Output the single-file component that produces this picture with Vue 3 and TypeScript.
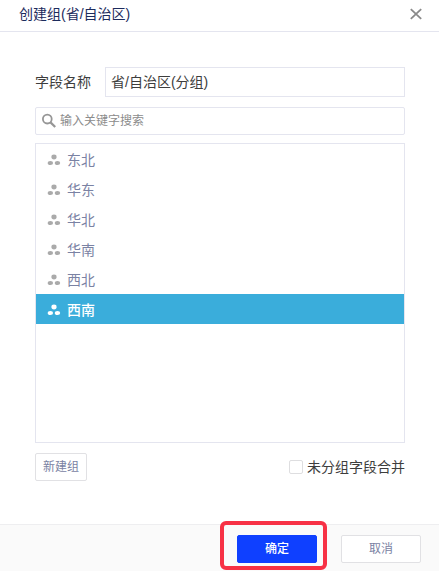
<script setup lang="ts">
import { ref } from 'vue'

const groups: string[] = ['东北', '华东', '华北', '华南', '西北', '西南']
const selected = ref('西南')
const fieldName = ref('省/自治区(分组)')
const keyword = ref('')
const merge = ref(false)
</script>

<template>
  <div class="dialog">
    <header class="header">
      <span class="title">创建组(省/自治区)</span>
      <svg class="close" width="12" height="12" viewBox="0 0 12 12">
        <path d="M.8 1.2L11.2 10.8M11.2 1.2L.8 10.8" fill="none" stroke="#8a8a8a" stroke-width="1.8" />
      </svg>
    </header>

    <main class="body">
      <div class="field">
        <label class="field-label" for="name">字段名称</label>
        <input id="name" v-model="fieldName" class="name-input" type="text" />
      </div>

      <div class="search">
        <svg width="16" height="16" viewBox="0 0 16 16">
          <circle cx="6.3" cy="6.1" r="4.4" fill="none" stroke="#969696" stroke-width="1.8" />
          <path d="M9.5 9.4L14.2 14" fill="none" stroke="#969696" stroke-width="2.2" />
        </svg>
        <input v-model="keyword" class="search-input" type="text" placeholder="输入关键字搜索" />
      </div>

      <ul class="list">
        <li
          v-for="group in groups"
          :key="group"
          class="row"
          :class="{ active: group === selected }"
          @click="selected = group"
        >
          <svg class="group-icon" width="14" height="12" viewBox="0 0 14 12">
            <ellipse cx="7" cy="3" rx="2.6" ry="2.4" />
            <ellipse cx="3.4" cy="9" rx="2.7" ry="2.1" />
            <ellipse cx="10.5" cy="9" rx="2.7" ry="2.1" />
          </svg>
          <span class="row-text">{{ group }}</span>
        </li>
      </ul>

      <div class="tools">
        <button class="btn new" type="button">新建组</button>
        <label class="merge">
          <input v-model="merge" class="box" type="checkbox" />
          <span>未分组字段合并</span>
        </label>
      </div>
    </main>

    <footer class="footer">
      <div class="highlight">
        <button class="btn primary" type="button">确定</button>
      </div>
      <button class="btn cancel" type="button">取消</button>
    </footer>
  </div>
</template>

<style>
body {
  margin: 0;
  background: #fff;
}
</style>

<style scoped>
.dialog,
.dialog * {
  box-sizing: border-box;
}
.dialog {
  display: flex;
  flex-direction: column;
  width: 439px;
  height: 571px;
  overflow: hidden;
  background: #fff;
  font: 14px/20px "Liberation Sans", "Noto Sans CJK SC", sans-serif;
  color: #3d3d3d;
}
input,
button {
  margin: 0;
  font-family: inherit;
  outline: none;
}
.header {
  display: flex;
  align-items: center;
  justify-content: space-between;
  height: 32px;
  padding: 0 17px 3px 19px;
  border-bottom: 1px solid #e4e5ef;
}
.title {
  color: #1c2b5d;
}
.close {
  display: block;
}
.body {
  flex: 1;
  padding: 35px 34px 0 35px;
}
.field {
  display: flex;
  align-items: center;
  height: 30px;
}
.field-label {
  width: 70px;
}
.name-input {
  flex: 1;
  min-width: 0;
  height: 30px;
  padding: 0 5px 2px;
  border: 1px solid #e4e5ef;
  font-size: 14px;
  color: #3d3d3d;
}
.search {
  display: flex;
  align-items: center;
  height: 28px;
  margin-top: 10px;
  padding-left: 5px;
  border: 1px solid #e4e5ef;
  border-radius: 2px;
}
.search-input {
  flex: 1;
  height: 24px;
  padding: 0 0 0 3px;
  border: 0;
  font-size: 12px;
}
.search-input::placeholder {
  color: #8c8c8c;
  opacity: 1;
}
.list {
  height: 300px;
  margin: 8px 0 0;
  padding: 0;
  border: 1px solid #e4e5ef;
  list-style: none;
}
.row {
  display: flex;
  align-items: center;
  gap: 6px;
  height: 30px;
  padding: 2px 0 0 11px;
  color: #7a82a3;
}
.group-icon {
  fill: #aaa;
}
.row.active {
  background: #3aaddb;
  color: #fff;
  font-weight: 500;
}
.row.active .group-icon {
  fill: #fff;
}
.tools {
  display: flex;
  align-items: center;
  justify-content: space-between;
  height: 28px;
  margin-top: 10px;
}
.btn {
  height: 28px;
  padding: 0;
  border: 1px solid #e1e1e4;
  border-radius: 2px;
  background: #fff;
  font-size: 12px;
  line-height: 26px;
  color: #7a82a3;
}
.new {
  width: 52px;
}
.merge {
  display: flex;
  align-items: center;
  gap: 4px;
}
.box {
  width: 14px;
  height: 14px;
  appearance: none;
  border: 1px solid #dedee0;
  border-radius: 2px;
  background: #fff;
}
.box:checked {
  background: #0f40ff;
}
.footer {
  display: flex;
  align-items: flex-start;
  justify-content: flex-end;
  gap: 14px;
  height: 47px;
  padding-right: 18px;
  border-top: 1px solid #eeeef0;
  background: #fafafa;
}
.highlight {
  display: flex;
  flex: none;
  width: 107px;
  height: 49px;
  margin-top: -4px;
  padding: 10px 0 0 13px;
  border: 4px solid #f73145;
  border-radius: 6px;
}
.primary {
  width: 80px;
  border-color: #0f40ff;
  background: #0f40ff;
  color: #fff;
  font-weight: 500;
}
.cancel {
  width: 80px;
  margin-top: 10px;
}
</style>
